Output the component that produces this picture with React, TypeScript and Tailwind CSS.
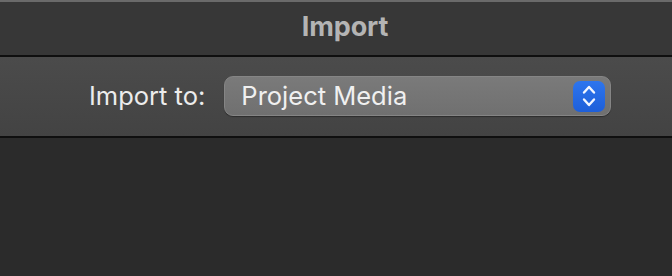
const Stepper = () => (
  <div className="flex h-[31px] w-[32px] items-center justify-center rounded-[7px] bg-gradient-to-b from-[#2d75ee] to-[#1e5fd9]">
    <svg width="14" height="26" viewBox="0 0 14 26" fill="none">
      <path
        d="M2 9.5 7 4l5 5.5M2 16.5 7 22l5-5.5"
        stroke="#f2f6ff"
        strokeWidth="2.4"
        strokeLinecap="round"
        strokeLinejoin="round"
      />
    </svg>
  </div>
);

const App = () => {
  return (
    <div
      className="flex h-[276px] w-[672px] flex-col bg-[#2b2b2b]"
      style={{ fontFamily: "Inter, 'Noto Sans', 'Liberation Sans', sans-serif" }}
    >
      <div className="flex h-[55px] items-center justify-center border-t-2 border-[#6a6a6a] bg-[#373737] pb-[3px] pl-[18px]">
        <span className="text-[27px] font-bold tracking-[-0.1px] text-[#b4b4b4]">Import</span>
      </div>
      <div className="h-[2px] bg-[#0f0f0f]" />

      <div className="flex h-[79px] items-start bg-gradient-to-b from-[#4b4b4b] to-[#434343] pl-[89px] pt-[19px]">
        <span className="mt-[2px] text-[25.5px] leading-[36px] text-[#ececec]">Import to:</span>
        <div className="ml-[19px] flex h-[40px] w-[387px] items-center justify-between rounded-[9px] border border-[#858585] bg-gradient-to-b from-[#7a7a7a] to-[#707070] pl-[16px] pr-[5px] shadow-[0_1px_1px_rgba(0,0,0,0.35)]">
          <span className="text-[25.5px] text-[#f0f0f0]">Project Media</span>
          <Stepper />
        </div>
      </div>
      <div className="h-[2px] bg-[#0f0f0f]" />

      <div className="flex-1 bg-[#2b2b2b]" />
    </div>
  );
};

export default App;
